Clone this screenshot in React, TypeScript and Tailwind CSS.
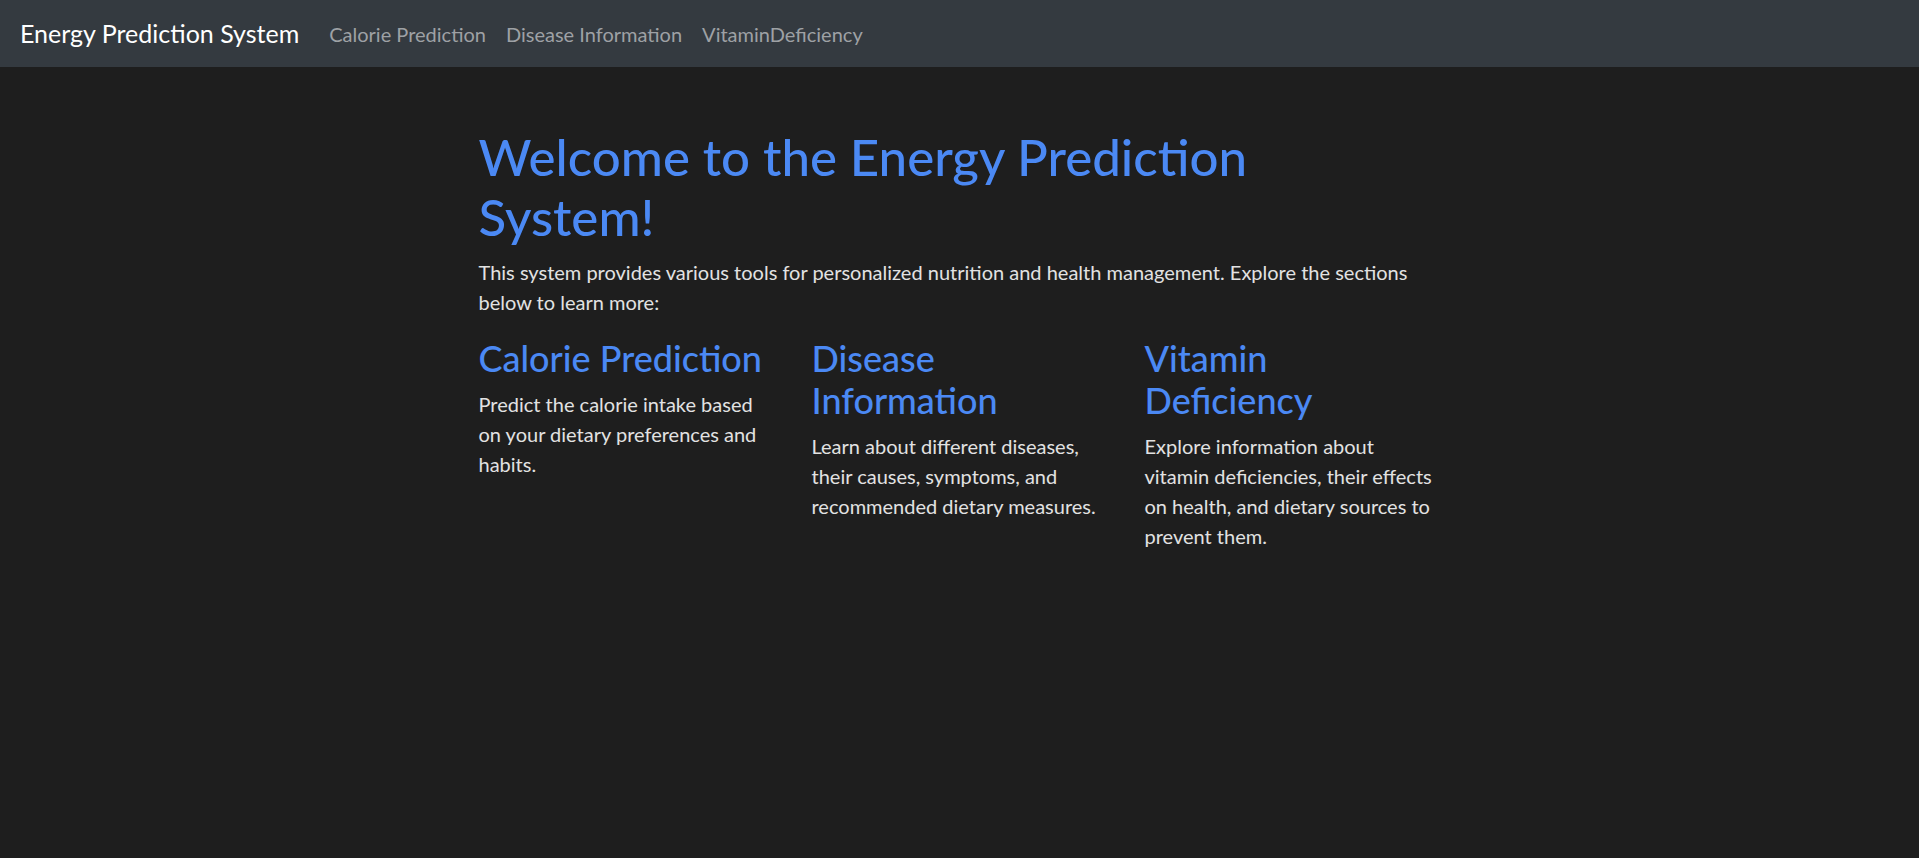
const sections = [
  {
    title: "Calorie Prediction",
    text: "Predict the calorie intake based on your dietary preferences and habits.",
  },
  {
    title: "Disease Information",
    text: "Learn about different diseases, their causes, symptoms, and recommended dietary measures.",
  },
  {
    title: "Vitamin Deficiency",
    text: "Explore information about vitamin deficiencies, their effects on health, and dietary sources to prevent them.",
  },
];

const links = ["Calorie Prediction", "Disease Information", "VitaminDeficiency"];

export default function App() {
  return (
    <div className="min-h-[858px] bg-[#1e1e1e] font-['Segoe_UI',Lato,'Noto_Sans',sans-serif] text-[#e2e2e2]">
      <nav className="flex h-[67px] items-center bg-[#343a40] pl-[20px]">
        <a href="#" className="mr-[20px] text-[25px] text-white">
          Energy Prediction System
        </a>
        <ul className="flex">
          {links.map((l) => (
            <li key={l}>
              <a href="#" className="block px-[10px] text-[20px] text-[#9ea1a5]">
                {l}
              </a>
            </li>
          ))}
        </ul>
      </nav>

      <main className="mx-auto w-[962px] pt-[60px]">
        <h1 className="mb-[10px] max-w-[900px] text-[51px] font-medium leading-[60px] text-[#4b89f4]">
          Welcome to the Energy Prediction System!
        </h1>
        <p className="mb-[20px] text-[20px] leading-[30px]">
          This system provides various tools for personalized nutrition and health management. Explore the sections
          below to learn more:
        </p>

        <div className="grid grid-cols-[292px_292px_292px] gap-[41px]">
          {sections.map((s) => (
            <div key={s.title}>
              <h3 className="mb-[10px] text-[36px] font-medium leading-[42px] text-[#4b89f4]">{s.title}</h3>
              <p className="text-[20px] leading-[30px]">{s.text}</p>
            </div>
          ))}
        </div>
      </main>
    </div>
  );
}
